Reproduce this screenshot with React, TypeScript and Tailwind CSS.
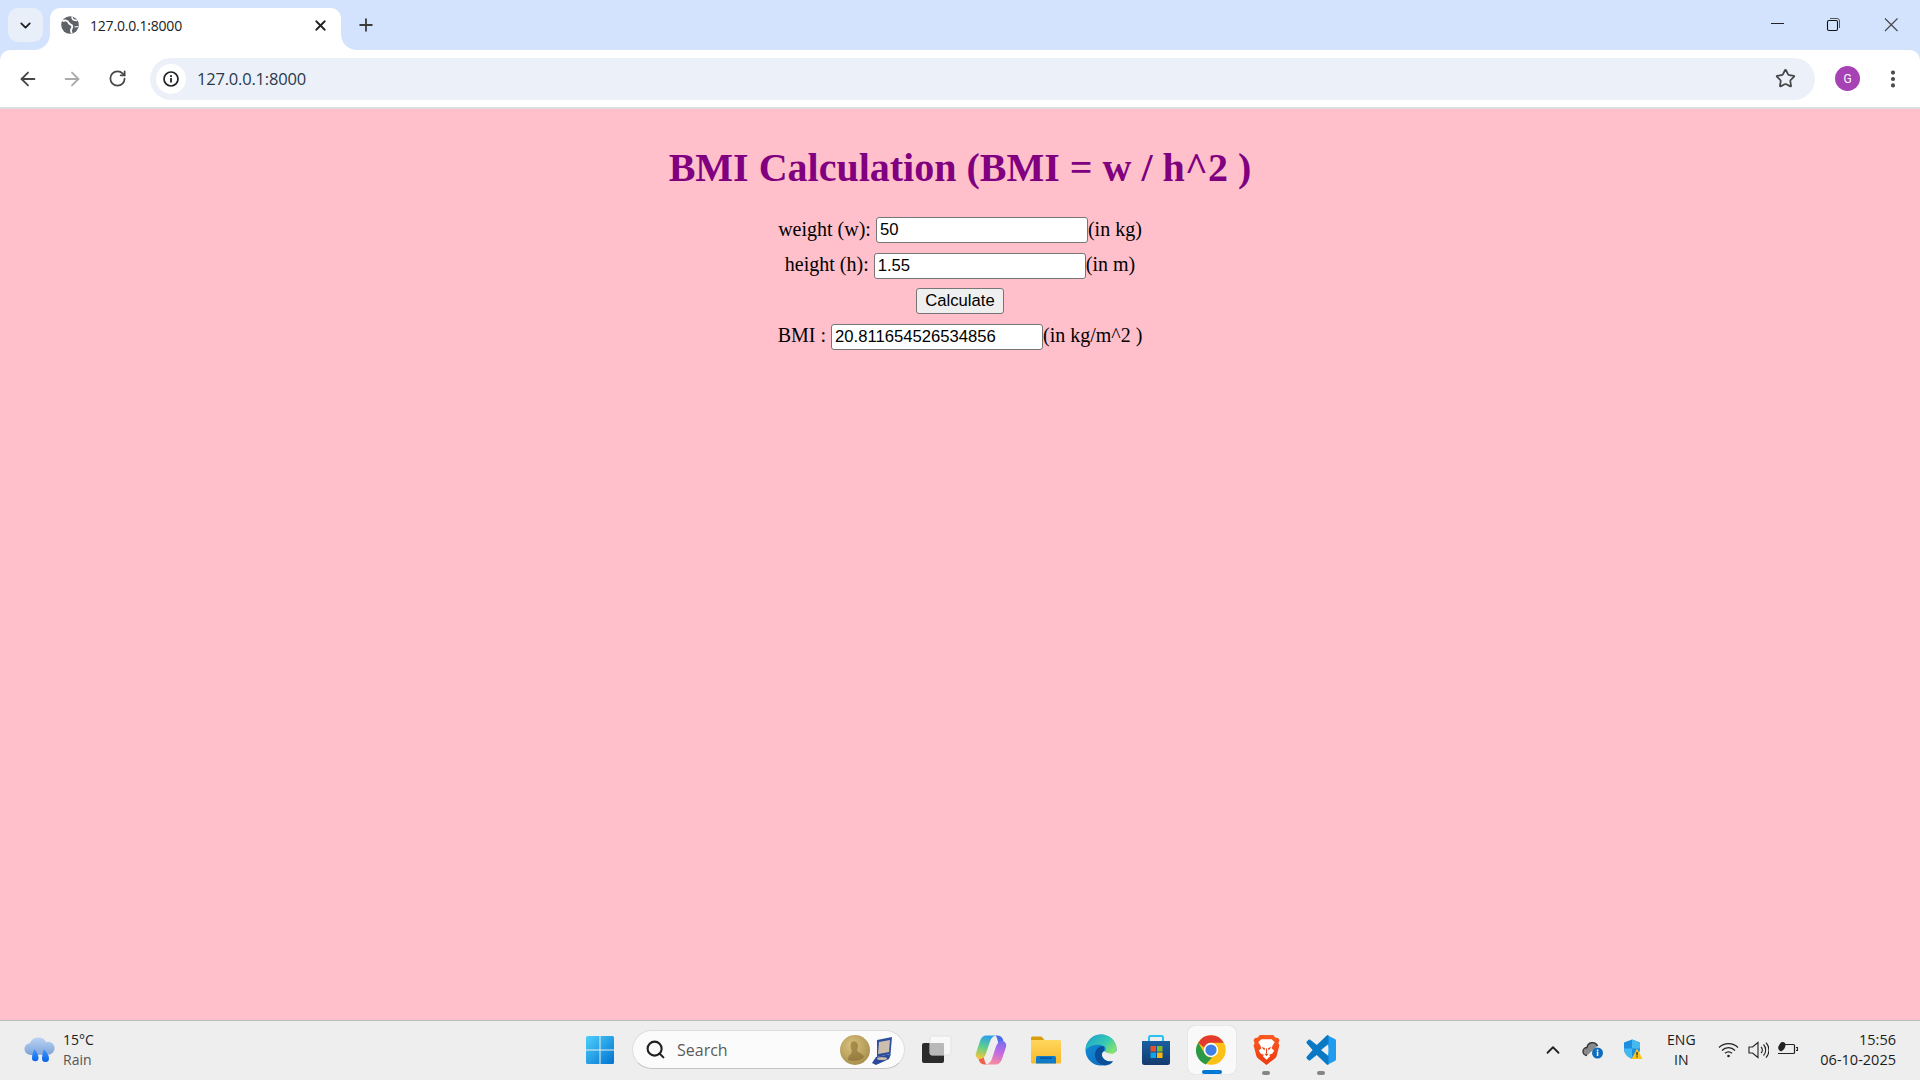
import React from "react";
import { ArrowLeft, ArrowRight, RotateCw, Star, Plus, X, ChevronDown, ChevronUp, EllipsisVertical, Search } from "lucide-react";

function Globe() {
  return (
    <svg width="18" height="18" viewBox="0 0 18 18" fill="none">
      <circle cx="9" cy="9" r="8.800" fill="#5f6368" />
      <path d="M1.500 5C4 4 7 4.500 7.500 6.500 8 8.500 10 8.500 11 9.500 12 11 10.500 12.500 10 14 9.800 15.500 10 16 11 17" stroke="#fff" strokeWidth="1.900" />
      <path d="M11 1C11 3 12.500 4.500 16 4.500" stroke="#fff" strokeWidth="1.500" />
      <path d="M13.500 11l3.500-.5" stroke="#fff" strokeWidth="1.200" />
    </svg>
  );
}

function InfoIcon() {
  return (
    <svg width="16" height="16" viewBox="0 0 16 16" fill="none">
      <circle cx="8" cy="8" r="7" stroke="#202124" strokeWidth="1.700" />
      <rect x="7.100" y="7" width="1.800" height="4.500" fill="#202124" />
      <rect x="7.100" y="4.200" width="1.800" height="1.800" fill="#202124" />
    </svg>
  );
}

function Flare({ side }: { side: "left" | "right" }) {
  return (
    <svg width="16" height="16" viewBox="0 0 16 16" className="self-end shrink-0">
      <path d={side === "left" ? "M16 0v16H0C9 16 16 9 16 0z" : "M0 0v16h16C7 16 0 9 0 0z"} fill="#fff" />
    </svg>
  );
}

function TabStrip() {
  return (
    <div className="flex h-[50px] bg-[#d3e3fd] relative">
      <div className="w-[34px] shrink-0 relative">
        <div className="absolute left-[8px] top-[8px] w-[35px] h-[34px] rounded-[10px] bg-[#e9eff9] flex items-center justify-center z-10">
          <ChevronDown size={17} strokeWidth={2.500} color="#1f1f1f" />
        </div>
      </div>
      <Flare side="left" />
      <div className="mt-[8px] w-[291px] h-[42px] bg-white rounded-t-[10px] flex items-center pl-[11px] pr-[12px] pb-[8px] shrink-0">
        <Globe />
        <span className="ml-[11px] text-[14px] text-[#202124] font-['Open_Sans',sans-serif] tracking-[-0.2px]">127.0.0.1:8000</span>
        <X size={17} strokeWidth={2.500} color="#202124" className="ml-auto" />
      </div>
      <Flare side="right" />
      <div className="-ml-[1px] mt-[15px] h-[20px]">
        <Plus size={20} strokeWidth={2.200} color="#3c3c3c" />
      </div>
      <div className="ml-auto flex items-start pr-[3px] pt-[18px]">
        <svg width="146" height="14" viewBox="0 0 146 14" fill="none" stroke="#222" strokeWidth="1">
          <path d="M0 5.500h13" />
          <rect x="56.500" y="2.500" width="10" height="10" rx="1.500" stroke="#111" strokeWidth="1.100" />
          <path d="M59 .5h7a2.500 2.500 0 0 1 2.500 2.500v7" stroke="#555" />
          <path d="M114 .5l12.500 12.500M126.500 .5L114 13" stroke="#444" strokeWidth="1.100" />
        </svg>
      </div>
    </div>
  );
}

function Toolbar() {
  return (
    <div className="h-[57px] bg-white flex items-center rounded-t-[10px] relative">
      <div className="w-[150px] flex shrink-0 items-center pl-[17px] gap-[22px]">
        <ArrowLeft size={22} strokeWidth={2} color="#474747" />
        <ArrowRight size={22} strokeWidth={2} color="#ababab" />
        <RotateCw size={19} strokeWidth={2.200} color="#474747" className="ml-[3px]" />
      </div>
      <div className="w-[1665px] h-[42px] shrink-0 rounded-full bg-[#ebf0f9] flex items-center pl-[6px]">
        <div className="w-[30px] h-[30px] rounded-full bg-white flex items-center justify-center">
          <InfoIcon />
        </div>
        <span className="ml-[11px] pt-[2px] text-[16.500px] text-[#2a3a4a] font-['Open_Sans',sans-serif] tracking-[-0.2px]">127.0.0.1:8000</span>
        <Star size={21} strokeWidth={2} color="#474747" className="ml-auto mr-[19px]" />
      </div>
      <div className="ml-[20px] w-[25px] h-[25px] rounded-full bg-[#a742b5] text-white text-[12px] flex items-center justify-center font-['Roboto',sans-serif]">G</div>
      <EllipsisVertical size={22} strokeWidth={2.500} color="#474747" className="ml-[22px]" />
    </div>
  );
}

function Row({ label, value, unit }: { label: string; value: string; unit: string }) {
  return (
    <div className="flex items-center justify-center h-[26px] text-[20px] text-black font-['Liberation_Serif',serif]">
      <span className="mr-[5px] pb-[3px]">{label}</span>
      <input
        readOnly
        value={value}
        className="w-[212px] h-[26px] bg-white border border-[#767676] rounded-[3px] px-[3px] text-[16.670px] font-['Liberation_Sans',sans-serif] text-black outline-none"
      />
      <span className="pb-[3px]">{unit}</span>
    </div>
  );
}

function Page() {
  return (
    <main className="flex-1 bg-[#ffc0cb] pt-[36px]">
      <h1 className="text-[40px] leading-[46px] font-bold text-[#800080] text-center font-['Liberation_Serif',serif] mb-[26px]">
        BMI Calculation (BMI = w / h^2 )
      </h1>
      <div className="flex flex-col gap-[9.500px]">
        <Row label="weight (w):" value="50" unit="(in kg)" />
        <Row label="height (h):" value="1.55" unit="(in m)" />
        <div className="flex justify-center h-[26px]">
          <button className="w-[88px] h-[26px] bg-[#efefef] border border-[#767676] rounded-[3px] text-[16.670px] leading-none text-black font-['Liberation_Sans',sans-serif]">
            Calculate
          </button>
        </div>
        <Row label="BMI :" value="20.811654526534856" unit="(in kg/m^2 )" />
      </div>
    </main>
  );
}

function WeatherIcon() {
  return (
    <svg width="32" height="28" viewBox="0 0 32 28">
      <defs>
        <linearGradient id="wc" x1="0" y1="0" x2="0" y2="1">
          <stop offset="0" stopColor="#b9d3f5" />
          <stop offset="1" stopColor="#7fa4d8" />
        </linearGradient>
        <linearGradient id="wd" x1="0" y1="0" x2="0" y2="1">
          <stop offset="0" stopColor="#3d9bff" />
          <stop offset="1" stopColor="#0a62e6" />
        </linearGradient>
      </defs>
      <path d="M7 19a6 6 0 0 1-1-12 9 9 0 0 1 16-1 6.500 6.500 0 0 1 4 12.500z" fill="url(#wc)" />
      <path d="M10.500 13c3 4 4 6 4 9a3 3 0 0 1-6.500 0c0-3 1-6 2.500-9zM20 13c3 4 5 6 5 9.500a3.500 3.500 0 0 1-7 0c0-3 1-6.500 2-9.500z" fill="url(#wd)" />
    </svg>
  );
}

function StartIcon() {
  return (
    <svg width="30" height="30" viewBox="0 0 30 30">
      <defs>
        <linearGradient id="st" x1="0" y1="0" x2="1" y2="1">
          <stop offset="0" stopColor="#4fd0fb" />
          <stop offset="1" stopColor="#0072d0" />
        </linearGradient>
      </defs>
      <path d="M1 2.500A1.500 1.500 0 0 1 2.500 1h12v13.500H1zM15.500 1h12A1.500 1.500 0 0 1 29 2.500v12H15.500zM1 15.500h13.500V29h-12A1.500 1.500 0 0 1 1 27.500zM15.500 15.500H29v12a1.500 1.500 0 0 1-1.500 1.500h-12z" fill="url(#st)" />
    </svg>
  );
}

function Medal() {
  return (
    <svg width="54" height="32" viewBox="0 0 54 32">
      <defs>
        <radialGradient id="md" cx="0.4" cy="0.35" r="0.75">
          <stop offset="0" stopColor="#d9c27e" />
          <stop offset="1" stopColor="#a48a48" />
        </radialGradient>
      </defs>
      <circle cx="15" cy="16" r="15" fill="url(#md)" />
      <path d="M12 8c3-1.500 6 1 6 4 0 2-1 3-1 4l1 2c3 1 5 3 6 5-3 4-11 5-16 3 0-3 1-5 3-6l1-3c-2-3-2-7 0-9z" fill="#85692e" opacity="0.6" />
      <path d="M37 6l15-3-1.500 17-13.500 3z" fill="#2e4f9f" />
      <path d="M39 8l11-2-1 12-11 2z" fill="#cdbfae" />
      <path d="M32 29l4-6 15-3-2 5-13 6z" fill="#294a9c" />
      <ellipse cx="42" cy="24.500" rx="5" ry="1.500" fill="#c9b9a6" />
    </svg>
  );
}

function TaskView() {
  return (
    <svg width="31" height="29" viewBox="0 0 31 29">
      <rect x="1" y="8" width="22" height="20" rx="2" fill="#2b2b2b" />
      <rect x="9" y="1" width="21" height="19" rx="2" fill="#f8f8f8" stroke="#e2e2e2" />
      <rect x="9" y="8" width="14" height="12" rx="1" fill="#b9b9b9" />
    </svg>
  );
}

function Copilot() {
  return (
    <svg width="32" height="30" viewBox="0 0 32 30">
      <defs>
        <linearGradient id="c1" x1="0.500" y1="0" x2="0.300" y2="1">
          <stop offset="0" stopColor="#2c9fec" />
          <stop offset="0.500" stopColor="#5fcf8a" />
          <stop offset="1" stopColor="#f5c63a" />
        </linearGradient>
        <linearGradient id="c2" x1="0.700" y1="0" x2="0.500" y2="1">
          <stop offset="0" stopColor="#7a6cf0" />
          <stop offset="0.500" stopColor="#c46ae0" />
          <stop offset="1" stopColor="#f78ca0" />
        </linearGradient>
      </defs>
      <path d="M20 .5h2c3 0 5 1.500 6 4l.5 3c-1.500-1-4-1-5 1-1-4-2-8-3.500-8z" fill="#4a6cea" />
      <path d="M12 29.500h-2c-3 0-5-1.500-6-4l-.5-3c1.500 1 4 1 5-1 1 4 2 8 3.500 8z" fill="#f0604a" />
      <path d="M11 .5h10c-3 .5-5 3-6 6L11 18.500c-1 3-3 5.500-6 5.500-3 0-5-3-4-6l4-12c1-3.500 3.500-5.500 6-5.500z" fill="url(#c1)" />
      <path d="M21 29.500H11c3-.5 5-3 6-6L21 11.500c1-3 3-5.500 6-5.500 3 0 5 3 4 6l-4 12c-1 3.500-3.500 5.500-6 5.500z" fill="url(#c2)" />
    </svg>
  );
}

function FolderIcon() {
  return (
    <svg width="32" height="28" viewBox="0 0 32 28">
      <defs>
        <linearGradient id="f1" x1="0" y1="0" x2="0" y2="1">
          <stop offset="0" stopColor="#ffd65c" />
          <stop offset="1" stopColor="#f7b92c" />
        </linearGradient>
      </defs>
      <path d="M1 2a1.500 1.500 0 0 1 1.500-1.500h9L15 4.500H1z" fill="#d99e0b" />
      <rect x="1" y="4" width="30" height="23.500" rx="1.500" fill="url(#f1)" />
      <path d="M6 27.500v-6a1.500 1.500 0 0 1 1.500-1.500h17a1.500 1.500 0 0 1 1.500 1.500v6z" fill="#0f7ccb" />
      <rect x="10" y="21.500" width="12" height="1.300" fill="#0a4f8e" />
    </svg>
  );
}

function EdgeIcon() {
  return (
    <svg width="32" height="32" viewBox="0 0 32 32">
      <defs>
        <linearGradient id="e1" x1="0" y1="0" x2="1" y2="0.700">
          <stop offset="0" stopColor="#1b9fd0" />
          <stop offset="0.600" stopColor="#35c8b4" />
          <stop offset="1" stopColor="#86e36a" />
        </linearGradient>
        <linearGradient id="e2" x1="0" y1="0" x2="1" y2="1">
          <stop offset="0" stopColor="#1294dc" />
          <stop offset="1" stopColor="#0c62b6" />
        </linearGradient>
      </defs>
      <circle cx="16" cy="16" r="15.500" fill="url(#e2)" />
      <path d="M32 17V32H22C25 31 27 29 28 27 24 28 20 27 18 24 16 21 17 18 19 17 22 19 28 19 32 17z" fill="#eeeeee" />
      <path d="M19 12.500C14 11.500 10 16 10 21 10 26 14 31 20 31.500 25 31 27 29 28 27 24 28 20 27 18 24 16 21 17 18 19 17z" fill="#0b4f9a" />
      <path d="M1 13C3 5 9 .5 16 .5c9 0 15.500 7 15.500 13.500 0 3-1 5-3 5.500-3 .5-6 0-9-2.500 1.500-1.500 1.500-3.500 0-4.500-5-3-14-2-18.500 3z" fill="url(#e1)" />
    </svg>
  );
}

function StoreIcon() {
  return (
    <svg width="30" height="32" viewBox="0 0 30 32">
      <defs>
        <linearGradient id="s1" x1="0" y1="0" x2="0" y2="1">
          <stop offset="0" stopColor="#1a5fa0" />
          <stop offset="1" stopColor="#143a6e" />
        </linearGradient>
      </defs>
      <path d="M8 7V3.500A1.500 1.500 0 0 1 9.500 2h11A1.500 1.500 0 0 1 22 3.500V7" fill="none" stroke="#29c0f2" strokeWidth="2" />
      <path d="M1 7h28v21.500a2.500 2.500 0 0 1-2.500 2.500h-23A2.500 2.500 0 0 1 1 28.500z" fill="url(#s1)" />
      <rect x="9.500" y="12" width="5.500" height="5.500" fill="#e8512a" />
      <rect x="16" y="12" width="5.500" height="5.500" fill="#7fb92a" />
      <rect x="9.500" y="18.500" width="5.500" height="5.500" fill="#0fa6e8" />
      <rect x="16" y="18.500" width="5.500" height="5.500" fill="#fbb40c" />
    </svg>
  );
}

function ChromeIcon() {
  return (
    <svg width="30" height="30" viewBox="0 0 48 48">
      <circle cx="24" cy="24" r="23.500" fill="#fbc116" />
      <path d="M24 .5a23.500 23.500 0 0 1 20.400 11.800H24a11.800 11.800 0 0 0-11 7.500L3.600 12.300A23.500 23.500 0 0 1 24 .5z" fill="#e33b2e" />
      <path d="M3.600 12.300L14 30a11.800 11.800 0 0 0 12 5.600L15.500 47A23.500 23.500 0 0 1 3.600 12.300z" fill="#2a9a47" />
      <circle cx="24" cy="24" r="11.500" fill="#fff" />
      <circle cx="24" cy="24" r="9" fill="#3f7fe8" />
    </svg>
  );
}

function BraveIcon() {
  return (
    <svg width="27" height="31" viewBox="0 0 26 30">
      <defs>
        <linearGradient id="b1" x1="0" y1="0" x2="0" y2="1">
          <stop offset="0" stopColor="#fb5a22" />
          <stop offset="1" stopColor="#ee3a0f" />
        </linearGradient>
      </defs>
      <path d="M6.500 1h13l2 2.500 3 .5 1 2-1 3 1 2-2.500 9.500c-.5 2-1.500 3-3.500 4.300L13 30l-6.500-5.200C4.500 23.500 3.500 22.500 3 20.500L.5 11l1-2-1-3 1-2 3-.5z" fill="url(#b1)" />
      <path d="M8 5h10l3 3-2 3-1 3 2.500 2-2 3-3 1 1 1.500L13 25l-3.500-3.500 1-1.500-3-1-2-3L8 14l-1-3-2-3z" fill="#fff" />
      <path d="M8 12.500l3.500 1-.5 2.500zM18 12.500l-3.500 1 .5 2.500zM11 19h4l-2 2.500z" fill="#ef4214" />
      <path d="M13 14v5" stroke="#ef4214" strokeWidth="1" />
    </svg>
  );
}

function VSCodeIcon() {
  return (
    <svg width="30" height="30" viewBox="0 0 100 100">
      <path d="M71 99l25-12c2.500-1 4-3.500 4-6V19c0-2.500-1.500-5-4-6L71 1 75 50z" fill="#1f9cf0" />
      <path d="M75 1c-2-1-4.500-.5-6 1L36 33 14 16c-1.500-1-3.500-1-5 0l-6 5c-2 2-2 5 0 7l19 22L3 72c-2 2-2 5 0 7l6 5c1.500 1 3.500 1 5 0l22-17 33 31c1.500 1.500 4 2 6 1V70L50 50l25-20z" fill="#0a78c4" />
    </svg>
  );
}

function TaskIcon({ children, active, dot }: { children: React.ReactNode; active?: boolean; dot?: boolean }) {
  return (
    <div className="w-[55px] h-[60px] shrink-0 flex items-center justify-center relative">
      {active && <div className="absolute left-[4px] top-[6px] w-[48px] h-[48px] rounded-[6px] bg-[#f9f9f9] shadow-[0_0_1px_rgba(0,0,0,0.25)]" />}
      <div className="relative flex">{children}</div>
      {active && <div className="absolute left-[18px] top-[50px] w-[20px] h-[4px] rounded-full bg-[#0078d4]" />}
      {dot && <div className="absolute left-[23px] top-[51px] w-[8px] h-[4px] rounded-full bg-[#858585]" />}
    </div>
  );
}

function Taskbar() {
  return (
    <footer className="h-[60px] bg-[#eeeeee] border-t border-[#bdbdbd] pb-[2px] flex items-center font-['Open_Sans',sans-serif] relative">
      <div className="w-[577px] shrink-0 flex items-center pl-[24px]">
        <WeatherIcon />
        <div className="ml-[7px] flex flex-col text-[14px] leading-[20px]">
          <span className="text-[#1c1c1c]">15°C</span>
          <span className="text-[#555555]">Rain</span>
        </div>
      </div>
      <div className="w-[46px] shrink-0 flex justify-center"><StartIcon /></div>
      <div className="ml-[9px] w-[273px] h-[39px] shrink-0 rounded-full bg-[#fbfbfb] border border-[#dddddd] border-b-[#c4c4c4] flex items-center pl-[12px] pr-[10px]">
        <Search size={21} strokeWidth={2.400} color="#202020" />
        <span className="ml-[11px] text-[16px] text-[#5c5c5c]">Search</span>
        <span className="ml-auto flex"><Medal /></span>
      </div>
      <div className="w-[3.500px] shrink-0" />
      <TaskIcon><TaskView /></TaskIcon>
      <TaskIcon><Copilot /></TaskIcon>
      <TaskIcon><FolderIcon /></TaskIcon>
      <TaskIcon><EdgeIcon /></TaskIcon>
      <TaskIcon><StoreIcon /></TaskIcon>
      <TaskIcon active><ChromeIcon /></TaskIcon>
      <TaskIcon dot><BraveIcon /></TaskIcon>
      <TaskIcon dot><VSCodeIcon /></TaskIcon>
      <div className="ml-auto flex items-center pr-[24px]">
        <div className="w-[40px] flex justify-center"><ChevronUp size={22} strokeWidth={2} color="#222" /></div>
        <div className="w-[40px] flex justify-center">
          <svg width="22" height="18" viewBox="0 0 22 18">
            <path d="M5 14.500a4 4 0 0 1 0-8 5.500 5.500 0 0 1 10.500-1.500" fill="#8a8a8a" stroke="#333" strokeWidth="1.400" />
            <circle cx="15.500" cy="12" r="5.500" fill="#0f6cbd" />
            <rect x="14.800" y="10.500" width="1.500" height="4.500" fill="#fff" />
            <rect x="14.800" y="8.500" width="1.500" height="1.500" fill="#fff" />
          </svg>
        </div>
        <div className="w-[40px] flex justify-center">
          <svg width="20" height="21" viewBox="0 0 20 21">
            <path d="M9 .5l8 3v6c0 5-3 8-8 10.500-5-2.500-8-5.500-8-10.500v-6z" fill="#1c8fe0" />
            <path d="M9 .5l8 3v6H9zM9 9.500v10.500C4 17.500 1 14.500 1 9.500z" fill="#46b8f0" />
            <path d="M14 9.500l5.500 10.500h-11z" fill="#fcc419" />
            <rect x="13.400" y="13" width="1.200" height="3.500" fill="#222" />
            <rect x="13.400" y="17.300" width="1.200" height="1.200" fill="#222" />
          </svg>
        </div>
        <div className="w-[56px] flex flex-col items-center text-[14px] leading-[20px] text-[#1c1c1c]">
          <span>ENG</span>
          <span>IN</span>
        </div>
        <div className="ml-[4px] w-[30px] flex justify-center">
          <svg width="21" height="16" viewBox="0 0 21 16" fill="none" stroke="#222" strokeWidth="1.200">
            <path d="M1 5.500a13.500 13.500 0 0 1 19 0M4 8.500a9 9 0 0 1 13 0M7 11.300a5 5 0 0 1 7 0" />
            <circle cx="10.500" cy="14" r="1.300" fill="#222" stroke="none" />
          </svg>
        </div>
        <div className="w-[30px] flex justify-center">
          <svg width="21" height="18" viewBox="0 0 21 18" fill="none" stroke="#222" strokeWidth="1.100">
            <path d="M1 6h3.500L10 1.500v15L4.500 12H1z" />
            <path d="M13 6a4 4 0 0 1 0 6M15.500 3.500a8 8 0 0 1 0 11M18 1.500a11 11 0 0 1 0 15" />
          </svg>
        </div>
        <div className="w-[28px] flex justify-center">
          <svg width="21" height="17" viewBox="0 0 21 17" fill="none" stroke="#222" strokeWidth="1.200">
            <path d="M8 3.500h8.500a1 1 0 0 1 1 1v7a1 1 0 0 1-1 1H1" />
            <path d="M19 6.500h1.500v3H19" />
            <path d="M5 1c2-.5 4 1 3.500 3.500S7 9 4 10.500C1 9 .5 6.500 2 4.500 2.500 3 3.500 1.500 5 1z" fill="#222" stroke="none" />
          </svg>
        </div>
        <div className="ml-[19px] flex flex-col items-end text-[14.500px] leading-[20px] text-[#1c1c1c]">
          <span>15:56</span>
          <span>06-10-2025</span>
        </div>
      </div>
    </footer>
  );
}

export default function App() {
  return (
    <div className="w-[1920px] h-[1080px] flex flex-col overflow-hidden bg-[#d3e3fd]">
      <TabStrip />
      <Toolbar />
      <div className="h-[2px] bg-[#dddddd]" />
      <Page />
      <Taskbar />
    </div>
  );
}
